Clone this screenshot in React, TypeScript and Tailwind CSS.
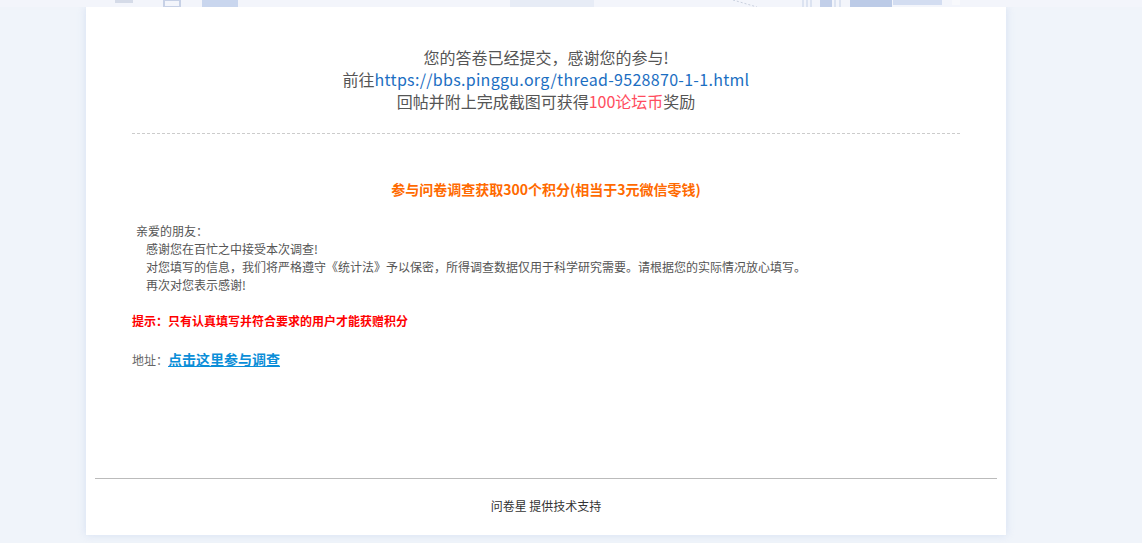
import React from "react";

function TopStrip() {
  return (
    <svg width="1142" height="7" viewBox="0 0 1142 7" className="block" preserveAspectRatio="none">
      <rect x="0" y="0" width="1142" height="7" fill="#f3f5fb" />
      <rect x="115" y="0" width="18" height="3" fill="#d5dbe8" />
      <rect x="164" y="0" width="16" height="7" fill="none" stroke="#c7d1e6" strokeWidth="2" />
      <rect x="202" y="0" width="36" height="7" fill="#c9d6ee" />
      <rect x="510" y="0" width="84" height="7" fill="#e7ecf6" />
      <line x1="733" y1="0" x2="757" y2="7" stroke="#c9d0de" strokeWidth="1" strokeDasharray="2 2" />
      <rect x="802" y="0" width="2" height="7" fill="#dce3f1" />
      <rect x="806" y="0" width="2" height="7" fill="#dce3f1" />
      <rect x="810" y="0" width="2" height="7" fill="#dce3f1" />
      <rect x="820" y="0" width="12" height="7" fill="#c2cfe9" />
      <rect x="834" y="0" width="2" height="7" fill="#dce3f1" />
      <rect x="839" y="0" width="2" height="7" fill="#dce3f1" />
      <rect x="850" y="0" width="42" height="7" fill="#bccbe7" />
      <rect x="893" y="0" width="49" height="5" fill="#d3ddf1" />
      <rect x="952" y="0" width="8" height="5" fill="#f8f9fc" />
    </svg>
  );
}

export default function App() {
  return (
    <div
      className="min-h-[543px] w-full bg-[#f0f4fa]"
      style={{ fontFamily: '"Noto Sans CJK SC", "Noto Sans", sans-serif' }}
    >
      <TopStrip />
      <div className="ml-[86px] w-[920px] h-[528px] bg-white shadow-[0_0_8px_rgba(180,200,235,0.45)] flex flex-col">
        <div className="px-[46px] pt-[39px]">
          <div className="text-center text-[16px] leading-[22px] text-[#555]">
            <div>您的答卷已经提交，感谢您的参与!</div>
            <div>
              前往
              <span className="text-[#1b6ec2] tracking-[0.3px]">
                https://bbs.pinggu.org/thread-9528870-1-1.html
              </span>
            </div>
            <div>
              回帖并附上完成截图可获得<span className="text-[#ff4d5e]">100论坛币</span>奖励
            </div>
          </div>
          <div className="mt-[21px] border-t border-dashed border-[#cccccc]" />
          <div className="mt-[45px] text-center text-[14px] leading-[20px] font-bold text-[#ff6a00]">
            参与问卷调查获取300个积分(相当于3元微信零钱)
          </div>
          <div className="mt-[23px] text-[12px] leading-[18px] text-[#555]">
            <div className="pl-[4px]">亲爱的朋友：</div>
            <div className="pl-[14px]">感谢您在百忙之中接受本次调查!</div>
            <div className="pl-[14px]">
              对您填写的信息，我们将严格遵守《统计法》予以保密，所得调查数据仅用于科学研究需要。请根据您的实际情况放心填写。
            </div>
            <div className="pl-[14px]">再次对您表示感谢!</div>
          </div>
          <div className="mt-[18px] text-[12px] leading-[18px] font-bold text-[#ff0000]">
            提示：只有认真填写并符合要求的用户才能获赠积分
          </div>
          <div className="mt-[19px] flex items-baseline leading-[20px]">
            <span className="text-[12px] text-[#666]">地址：</span>
            <span className="text-[14px] font-bold text-[#0b8ed8] underline">点击这里参与调查</span>
          </div>
        </div>
        <div className="flex-1" />
        <div className="mx-[9px] border-t border-[#bbbbbb]" />
        <div className="h-[56px] flex items-center justify-center text-[12px] text-[#333] pb-[2px]">
          问卷星 提供技术支持
        </div>
      </div>
    </div>
  );
}
